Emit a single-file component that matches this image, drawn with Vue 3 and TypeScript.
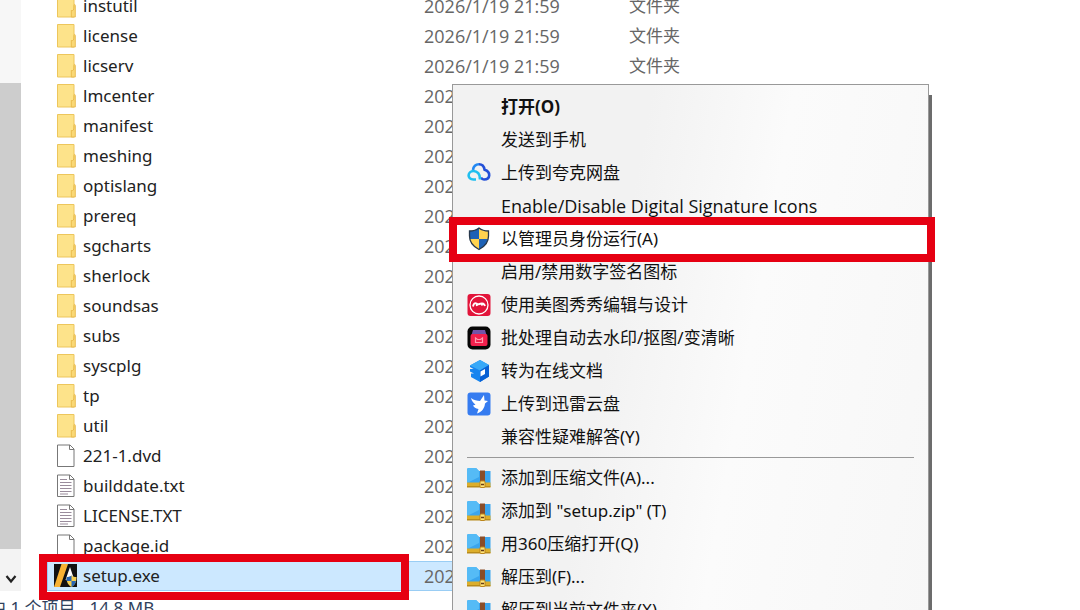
<script setup lang="ts">
type FileKind = 'folder' | 'blank' | 'text' | 'app'
interface FileRow { name: string; kind: FileKind; type?: string }
interface MenuEntry { label: string; icon?: string; bold?: boolean; active?: boolean; latin?: boolean }

const folders = ['instutil', 'license', 'licserv', 'lmcenter', 'manifest', 'meshing', 'optislang', 'prereq',
  'sgcharts', 'sherlock', 'soundsas', 'subs', 'syscplg', 'tp', 'util']
const modified = '2026/1/19 21:59'

const files: FileRow[] = [
  ...folders.map((name, index): FileRow => ({ name, kind: 'folder', type: index < 3 ? '文件夹' : undefined })),
  { name: '221-1.dvd', kind: 'blank' },
  { name: 'builddate.txt', kind: 'text' },
  { name: 'LICENSE.TXT', kind: 'text' },
  { name: 'package.id', kind: 'blank' },
  { name: 'setup.exe', kind: 'app' },
]

const mainEntries: MenuEntry[] = [
  { label: '打开(O)', bold: true },
  { label: '发送到手机' },
  { label: '上传到夸克网盘', icon: 'cloud' },
  { label: 'Enable/Disable Digital Signature Icons', latin: true },
  { label: '以管理员身份运行(A)', icon: 'shield', active: true },
  { label: '启用/禁用数字签名图标' },
  { label: '使用美图秀秀编辑与设计', icon: 'meitu' },
  { label: '批处理自动去水印/抠图/变清晰', icon: 'batch' },
  { label: '转为在线文档', icon: 'docs' },
  { label: '上传到迅雷云盘', icon: 'bird' },
  { label: '兼容性疑难解答(Y)' },
]
const zipEntries: MenuEntry[] = [
  { label: '添加到压缩文件(A)...', icon: 'zip' },
  { label: '添加到 "setup.zip" (T)', icon: 'zip' },
  { label: '用360压缩打开(Q)', icon: 'zip' },
  { label: '解压到(F)...', icon: 'zip' },
  { label: '解压到当前文件夹(X)', icon: 'zip' },
]
const groups = [mainEntries, zipEntries]
</script>

<template>
  <div class="explorer">
    <main class="pane">
      <div class="scrollbar">
        <div class="thumb"></div>
        <button class="scroll-down" type="button" aria-label="向下滚动">
          <svg width="12" height="10" viewBox="0 0 12 10"><path d="M1.500 2 6 7.500 10.500 2" fill="none" stroke="#222" stroke-width="2.200" /></svg>
        </button>
      </div>
      <table class="files">
        <tbody>
          <tr v-for="file in files" :key="file.name" :class="{ selected: file.kind === 'app' }">
            <td class="name">
              <div class="cell">
                <svg v-if="file.kind === 'folder'" class="file-icon" viewBox="0 0 24 24">
                  <path d="M.5.5H17v22.500H.5z" fill="#fde38a" stroke="#edc65c" />
                  <path d="M17 11.500c.3-1.500 1-1.500 1.300 0V23h-4v-6.500h1.500c1 0 1.200-3 1.200-5z" fill="#f9d876" stroke="#e8b84a" stroke-width=".9" />
                </svg>
                <svg v-else-if="file.kind !== 'app'" class="file-icon" viewBox="0 0 24 24">
                  <path d="M.5 1h12.500l4 4v17.500H.5z" fill="#fff" stroke="#777" />
                  <path d="M12.500 1v4.500H17" fill="none" stroke="#777" />
                  <path v-if="file.kind === 'text'" d="M3 5.500h7M3 8.500h11.500M3 11.500h11.500M3 14.500h11.500M3 17.500h11.500M3 20h8" stroke="#9a8c9c" stroke-width="1.200" />
                </svg>
                <svg v-else class="file-icon app" viewBox="0 0 24 24">
                  <path d="M0 0h23v23H0z" fill="#111" />
                  <path d="M7.500 0H14L6 23H0z" fill="#f9b233" />
                  <path d="M16 3l-4.500 13c3-1 6-1 9.500 2z" fill="#fff" />
                  <path d="M17.500 11.500c1.500 1.200 3 1.500 5 1.500 0 5-1.500 8-5 10-3.500-2-5-5-5-10 2 0 3.500-.3 5-1.500z" fill="#f4ce52" />
                  <path d="M17.500 11.500V17h-5v-4c2 0 3.500-.3 5-1.500zM17.500 17h4.500c-.5 2.500-2 4.800-4.500 6z" fill="#2866b4" />
                </svg>
                <span>{{ file.name }}</span>
              </div>
              <div v-if="file.kind === 'app'" class="frame file-frame"></div>
            </td>
            <td class="date">{{ modified }}</td>
            <td class="type">{{ file.type }}</td>
          </tr>
        </tbody>
      </table>
    </main>
    <footer class="status"><span>选中 1 个项目</span><span>14.8 MB</span></footer>

    <div class="menu" role="menu">
      <template v-for="(group, index) in groups" :key="index">
        <hr v-if="index > 0">
        <button v-for="entry in group" :key="entry.label" type="button" role="menuitem" class="item" :class="{ bold: entry.bold, active: entry.active, latin: entry.latin }">
          <span class="slot">
            <svg v-if="entry.icon === 'cloud'" viewBox="0 0 24 24" fill="none" stroke-width="2.600">
              <path d="M12 3.300c3 0 5 2 5.600 5.400 6.500 2 6 9.800-.6 9.800-1.500 0-2.500-1-3-2" stroke="#2450d8" />
              <path d="M6 9C6.500 5.500 9 3.300 12 3.300" stroke="#2388f2" />
              <path d="M13 18.500c.5-5.500-3-8.500-6.500-8.500-6 0-7 8.500 0 8.500H9" stroke="#20bfef" />
            </svg>
            <svg v-else-if="entry.icon === 'shield'" viewBox="0 0 24 24">
              <path d="M12 1c2.500 2 5.500 3 9.500 3v5c0 6-3.500 10.500-9.500 13.500C6 19.500 2.500 15 2.500 9V4C6.500 4 9.500 3 12 1z" fill="#ffd34f" />
              <path d="M12 1v11H3C2.500 10 2.500 7 2.500 4 6.500 4 9.500 3 12 1zM12 12h9c-1 4.500-4 8-9 10.500z" fill="#1d61b5" />
              <path d="M12 1c2.500 2 5.500 3 9.500 3v5c0 6-3.500 10.500-9.500 13.500C6 19.500 2.500 15 2.500 9V4C6.500 4 9.500 3 12 1z" fill="none" stroke="#27384c" stroke-width="1.300" />
            </svg>
            <svg v-else-if="entry.icon === 'meitu'" viewBox="0 0 24 24">
              <rect x=".5" y="1" width="23" height="22" rx="3" fill="#e2143a" />
              <circle cx="12" cy="12" r="9" fill="none" stroke="#fff" stroke-width="1.300" />
              <path d="M6 13.500c.5-3 2-4 3.500-3 1.500 1.200 2.500 1 4 .2 2-.9 3.800 0 4.500 2.300M9.500 11l.5 2M14.500 11l1 1.500" fill="none" stroke="#fff" stroke-width="1.900" />
            </svg>
            <svg v-else-if="entry.icon === 'batch'" viewBox="0 0 24 24">
              <rect x=".5" y=".5" width="23" height="23" rx="5" fill="#050505" />
              <path d="M6 4h12l1.500 5h-15z" fill="#7353a8" />
              <rect x="3.500" y="8" width="17" height="12" rx="2" fill="#f3204d" />
              <path d="M8.500 12v4.500h7V12l-2 1.500h-3z" fill="none" stroke="#ff9caf" stroke-width="1.200" />
            </svg>
            <svg v-else-if="entry.icon === 'docs'" viewBox="0 0 24 24">
              <path d="M13 1l9 5v11.500L13 23l-9-5v-3.500H7L3 12.500V10h3.500L3 8V6.500z" fill="#1785ef" />
              <path d="M13 1l9 5-9 5.500L3 6.500z" fill="#38a9f8" />
              <path d="M13 11.500 22 6v11.500L13 23z" fill="#0860d4" />
              <path d="M13.500 12.500l4.500-2.500v5l-4.500 2.500z" fill="#fff" />
            </svg>
            <svg v-else-if="entry.icon === 'bird'" viewBox="0 0 24 24">
              <rect x=".5" y=".5" width="23" height="23" rx="3" fill="#367cf0" />
              <path d="M4 6c3 2.300 6 2.700 9 3l4-6 .5 5.500 3.500.5-3 2.500c-.5 4.500-2.500 8-8 10l1.500-4.500c-3-.5-4.500-1.500-5.500-3.500l2.500-.8C6.500 11 4.500 9 4 6z" fill="#fff" />
            </svg>
            <svg v-else-if="entry.icon === 'zip'" viewBox="0 0 24 24">
              <path d="M0 3.500Q0 2 1.500 2H9l3 3h11.500v15H0z" fill="#3aa5ee" />
              <path d="M0 3.500Q0 2 1.500 2H9l3 3v6L0 17z" fill="#55bbf6" />
              <path d="M0 16.500h23.500V21H0z" fill="#dcae2b" />
              <path d="M0 20h23.500v1.500H0z" fill="#b88b1b" />
              <path d="M13 4.500h5V16h-5z" fill="#8a4d28" />
              <rect x="13" y="15" width="5" height="6.500" rx="1" fill="#ffe477" stroke="#bc851c" />
              <path d="M14 18.500h3" stroke="#663b16" stroke-width="1.500" />
            </svg>
          </span>
          <span>{{ entry.label }}</span>
          <span v-if="entry.active" class="frame item-frame"></span>
        </button>
      </template>
    </div>
  </div>
</template>

<style>
body { margin: 0; }
</style>

<style scoped>
.explorer {
  position: relative;
  display: flex;
  flex-direction: column;
  height: 100vh;
  overflow: hidden;
  background: #fff;
  color: #222;
  font: 17px/30px "Noto Sans", "Noto Sans CJK SC", sans-serif;
  white-space: nowrap;
}
.pane { display: flex; flex: 1; min-height: 0; }
.scrollbar {
  display: flex;
  flex-direction: column;
  width: 21px;
  margin-right: 26px;
  padding-top: 83px;
  box-sizing: border-box;
  background: #f7f7f7;
}
.thumb { flex: 1; background: #cdcdcd; }
.scroll-down {
  display: flex;
  align-items: center;
  justify-content: flex-end;
  height: 42px;
  padding: 18px 4px 0 0;
  border: 0;
  background: #f3f3f3;
}
.files {
  align-self: flex-start;
  margin-top: -9px;
  border-collapse: collapse;
}
td { height: 30px; padding: 0; }
.name { position: relative; width: 361px; }
.cell { display: flex; align-items: center; gap: 2px; padding-left: 10px; }
.file-icon { width: 24px; height: 24px; }
.file-icon.app { margin-left: -3px; margin-right: 3px; }
.date {
  width: 205px;
  padding-left: 16px;
  box-sizing: border-box;
  color: #666;
  font-family: "Open Sans", "Noto Sans", sans-serif;
  font-size: 18px;
}
.date { min-width: 221px; }
.type { width: 150px; color: #666; }
.selected { background: #cce8ff; box-shadow: inset 0 0 0 1px #99cdf4; }
.frame { position: absolute; border: 8px solid #e60012; pointer-events: none; }
.file-frame { inset: -7px -1px -9px -8px; }
.status {
  display: flex;
  gap: 14px;
  height: 19px;
  margin-left: -28px;
  line-height: 34px;
  color: #30415c;
}
.menu {
  position: absolute;
  top: 84px;
  left: 452px;
  width: 475px;
  padding: 5px 0 4px;
  border: 1px solid #999;
  background: linear-gradient(100deg, #f2f2f2 35%, #fbfbfb 60%, #f7f7f7);
  box-shadow: 4px 10px 0 -1px #6c6c6c;
}
.item {
  position: relative;
  display: flex;
  align-items: center;
  gap: 10px;
  width: 100%;
  height: 33px;
  padding: 0 0 0 14px;
  border: 0;
  background: none;
  color: #111;
  font: inherit;
}
.item.bold { font-weight: 700; }
.item.latin { font-family: "Open Sans", "Noto Sans", sans-serif; font-size: 18px; }
.item.active { background: #fff; }
.slot { display: flex; width: 24px; height: 24px; }
.slot svg { width: 24px; height: 24px; }
.item-frame { inset: -5px -7px -7px -4px; }
hr { height: 1px; margin: 4px 14px 3px; border: 0; background: #999; }
</style>
